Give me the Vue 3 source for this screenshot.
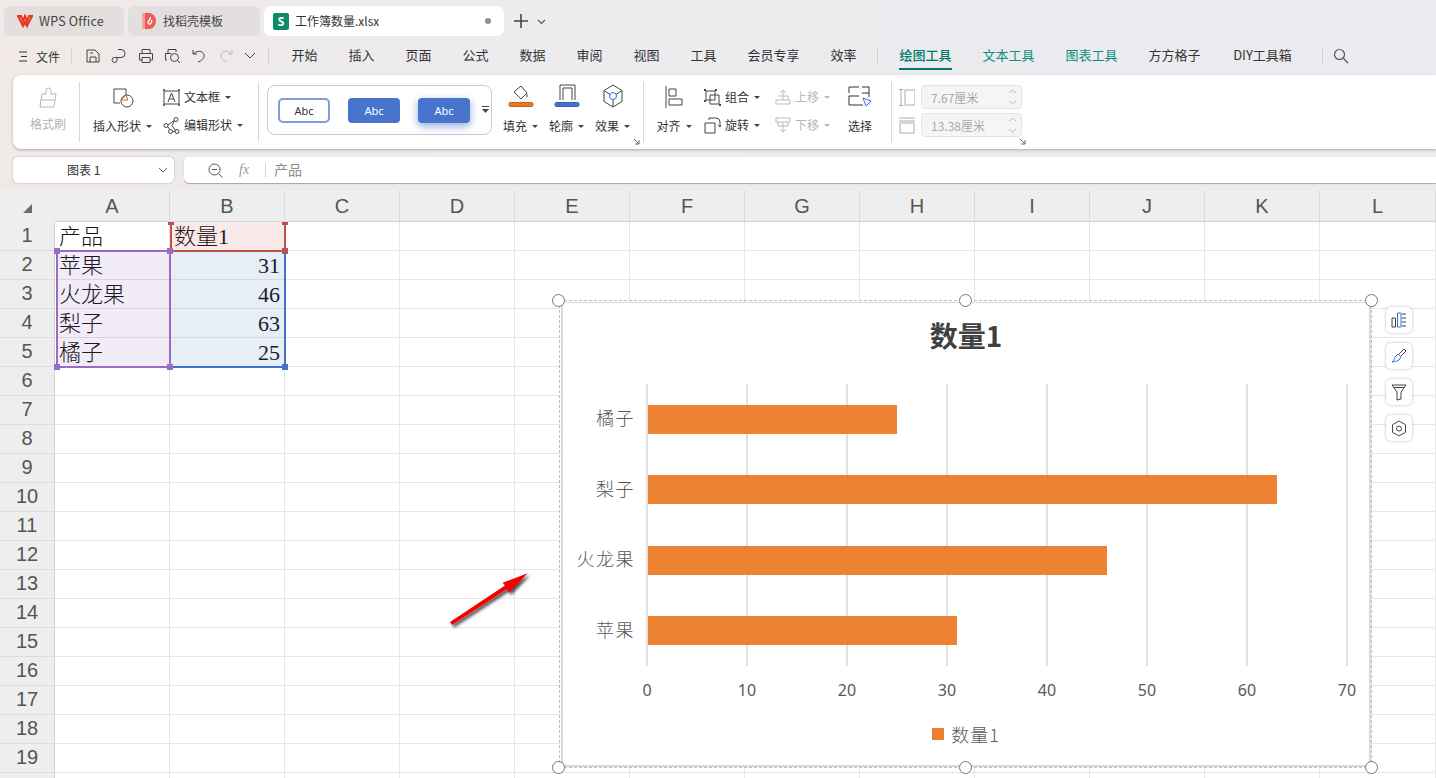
<template>
  <div class="app">
    <div class="tabbar">
      <div class="tab tab-home">
        <svg width="16" height="14" viewBox="0 0 16 14"><path d="M1 2h3l2 5 2-5 2 5 2-5h3l-5 10-2-4-2 4z" fill="none" stroke="#e8341c" stroke-width="2" stroke-linejoin="miter"/></svg>
        <span class="home-name">WPS Office</span>
      </div>
      <div class="tab tab-tpl">
        <svg width="16" height="18" viewBox="0 0 16 18"><path d="M1 1h7a7 8 0 0 1 0 16H1z" fill="#ee5a5a"/><path d="M1 1h3v16H1z" fill="#f7a09c"/><path d="M9 5c1 3-1 3-2 5 0 2 2 3 3 1l1-3" fill="none" stroke="#fff" stroke-width="1.4"/></svg>
        <span>找稻壳模板</span>
      </div>
      <div class="tab tab-active">
        <div class="s-logo">S</div>
        <span class="tab-name">工作簿数量.xlsx</span>
        <i class="tab-dot"></i>
      </div>
      <svg class="tab-plus" width="16" height="16" viewBox="0 0 16 16"><path d="M8 1v14M1 8h14" stroke="#444" stroke-width="1.6"/></svg>
      <svg class="caret-lg" width="9" height="6" viewBox="0 0 9 6"><path d="M1 1l3.500 3.500L8 1" fill="none" stroke="#555" stroke-width="1.1"/></svg>
    </div>

    <div class="menubar">
      <div class="file">
        <svg width="9" height="11" viewBox="0 0 9 11"><path d="M0 1h8M2 5.500h6M0 10h8" stroke="#333" stroke-width="1.100"/></svg>
        <span>文件</span>
      </div>
      <i class="menu-sep"></i>
      <div class="quick">
        <svg width="16" height="16" viewBox="0 0 16 16" fill="none" stroke="#444"><path d="M2 2h8l4 4v8H2zM5 14V9h6v5M5 5h3"/></svg>
        <svg width="16" height="16" viewBox="0 0 16 16" fill="none" stroke="#444"><path d="M7 1.500h3a4 4 0 0 1 0 8H7a2.500 2.500 0 0 0 0 0L3.500 9.500a2.500 2.500 0 1 0 2.500 3V9.500"/></svg>
        <svg width="16" height="16" viewBox="0 0 16 16" fill="none" stroke="#444"><path d="M4 5V1.500h8V5M4 12H1.500V5.500h13V12H12M4 9.500h8v5H4z"/></svg>
        <svg width="17" height="16" viewBox="0 0 17 16" fill="none" stroke="#444"><path d="M4 5V1.500h8V4M3 12H1.500V5.500H7"/><circle cx="10.500" cy="9.500" r="4"/><path d="M13.500 12.500l2.500 2.500"/></svg>
        <svg width="16" height="16" viewBox="0 0 16 16" fill="none" stroke="#444"><path d="M2 2v4h4M2.500 6C5 2.500 12 2 13 7c.5 4-3 6-6 7"/></svg>
        <svg width="16" height="16" viewBox="0 0 16 16" fill="none" stroke="#bbb"><path d="M14 2v4h-4M13.500 6C11 2.500 4 2 3 7c-.5 4 3 6 6 7"/></svg>
        <svg width="12" height="8" viewBox="0 0 12 8" fill="none" stroke="#444"><path d="M1 1l5 5 5-5"/></svg>
      </div>
      <i class="menu-sep sep-b"></i>
      <div v-for="m in menus" :key="m.label" class="menu-item" :style="{ width: m.w + 'px' }">
        <span>{{ m.label }}</span>
      </div>
      <i class="menu-sep sep-tools"></i>
      <div v-for="m in toolMenus" :key="m.label" class="menu-item" :class="m.cls" :style="{ width: m.w + 'px' }">
        <span>{{ m.label }}</span>
      </div>
      <i class="menu-sep sep-c"></i>
      <svg class="search" width="16" height="16" viewBox="0 0 16 16" fill="none" stroke="#555" stroke-width="1.200"><circle cx="6.500" cy="6.500" r="5"/><path d="M10.500 10.500l4.500 4.500"/></svg>
    </div>

    <div class="ribbon">
      <div class="group g-brush">
        <svg width="22" height="22" viewBox="0 0 22 22" fill="none" stroke="#b5b5b5"><path d="M9 7V3.500a2.500 2.500 0 0 1 5 0V7h5l-1 6-1 7H3l1-7 1-6z"/><path d="M4 13h14"/></svg>
        <span class="label dim">格式刷</span>
      </div>
      <i class="rib-sep"></i>
      <div class="group g-shape">
        <div class="stack-col">
          <svg width="22" height="22" viewBox="0 0 22 22" fill="none" stroke="#444"><path d="M14 3H2v14h6"/><path d="M14 3v7"/><circle cx="15" cy="15" r="6"/><path d="M9 14l5-5 2 5z" stroke="#d2691e" fill="#fff"/></svg>
          <span class="label">插入形状<i class="caret"></i></span>
        </div>
        <div class="rows">
          <div class="row-item">
            <svg width="17" height="17" viewBox="0 0 17 17" fill="none"><path d="M1 2v13M16 2v13M1 2h15M1 15h15" stroke="#444"/><path d="M5 13L8.500 4 12 13M6 10h5" stroke="#444"/><path d="M0 0h2v2H0zM15 0h2v2h-2zM0 15h2v2H0zM15 15h2v2h-2z" fill="#3a6fd8"/></svg>
            <span>文本框</span><i class="caret"></i>
          </div>
          <div class="row-item">
            <svg width="17" height="17" viewBox="0 0 17 17" fill="none" stroke="#444"><path d="M4 8.500L12 3M4 8.500l4 6M8 14.500h5M12 3l-3 5.500 4 6"/><circle cx="3" cy="8.500" r="2" fill="#fff"/><circle cx="13" cy="2.500" r="2" fill="#fff"/><circle cx="7.500" cy="14.500" r="2" fill="#fff"/><circle cx="14" cy="14.500" r="2" fill="#fff"/></svg>
            <span>编辑形状</span><i class="caret"></i>
          </div>
        </div>
      </div>
      <i class="rib-sep"></i>
      <div class="gallery">
        <div class="swatch sw-line">Abc</div>
        <div class="swatch sw-fill">Abc</div>
        <div class="swatch sw-glow">Abc</div>
        <svg class="more" width="7" height="8" viewBox="0 0 7 8"><path d="M0 .5h7" stroke="#444"/><path d="M0 3h7L3.500 7z" fill="#444"/></svg>
      </div>
      <div class="group g-fmt">
        <div class="stack-col fmt-item">
          <svg width="26" height="24" viewBox="0 0 26 24" fill="none" stroke="#444"><path d="M6 8l7-6 6 7-6 6z"/><path d="M19 10v3"/><rect x="1" y="18.500" width="24" height="4" rx="1.500" fill="#e87b22" stroke="#c9661a"/></svg>
          <span class="label">填充<i class="caret"></i></span>
        </div>
        <div class="stack-col fmt-item">
          <svg width="26" height="24" viewBox="0 0 26 24" fill="none" stroke="#444"><path d="M6 16V1h15v15M9 16V4h9v12"/><rect x="1" y="18.500" width="24" height="4" rx="1.500" fill="#4472c4" stroke="#3a62aa"/></svg>
          <span class="label">轮廓<i class="caret"></i></span>
        </div>
        <div class="stack-col fmt-item">
          <svg width="22" height="24" viewBox="0 0 22 24" fill="none" stroke="#444"><path d="M11 1l9 5.500v11L11 23l-9-5.500v-11zM2 6.500l6 4M20 6.500l-6 4M11 15v8"/><circle cx="11" cy="12" r="3.500" stroke="#3a6fd8"/></svg>
          <span class="label">效果<i class="caret"></i></span>
        </div>
        <svg class="launch" width="7" height="7" viewBox="0 0 7 7" fill="none" stroke="#666"><path d="M1 1l5 5M6 2v4H2"/></svg>
      </div>
      <i class="rib-sep"></i>
      <div class="group g-arrange">
        <div class="stack-col align-col">
          <svg width="18" height="22" viewBox="0 0 18 22" fill="none" stroke="#444"><path d="M1 0v22M4 3h7v7H4zM4 13h13v6H4z"/></svg>
          <span class="label">对齐<i class="caret"></i></span>
        </div>
        <div class="rows rows-tight">
          <div class="row-item">
            <svg width="17" height="17" viewBox="0 0 17 17" fill="none"><path d="M2 2h9v9H2zM6 6h9v9H6z" stroke="#444"/><path d="M0 0h2v2H0zM11 0h2v2h-2zM0 11h2v2H0zM15 15h2v2h-2z" fill="#444"/></svg>
            <span>组合</span><i class="caret"></i>
          </div>
          <div class="row-item">
            <svg width="17" height="17" viewBox="0 0 17 17" fill="none" stroke="#444"><path d="M1 6h10v10H1zM5 3V1h7a4 4 0 0 1 4 4v5M14 8l2 2 1-2"/></svg>
            <span>旋转</span><i class="caret"></i>
          </div>
        </div>
        <div class="rows rows-tight off">
          <div class="row-item">
            <svg width="16" height="16" viewBox="0 0 16 16" fill="none" stroke="#bbb"><path d="M1 11h14v4H1zM3 7h10v4M8 11V1M5 4l3-3 3 3"/></svg>
            <span>上移</span><i class="caret"></i>
          </div>
          <div class="row-item">
            <svg width="16" height="16" viewBox="0 0 16 16" fill="none" stroke="#bbb"><path d="M1 1h14v4H1zM3 5v4h10V5M8 5v10M5 12l3 3 3-3"/></svg>
            <span>下移</span><i class="caret"></i>
          </div>
        </div>
        <div class="stack-col pick-col">
          <svg width="24" height="22" viewBox="0 0 24 22" fill="none" stroke="#333"><path d="M1 7V1h10M14 1h7v10M1 10v9h14M1 10h10M14 7h7"/><path d="M15 12l8 3-5 5z" stroke="#3a6fd8" fill="#fff"/></svg>
          <span class="label">选择</span>
        </div>
      </div>
      <i class="rib-sep"></i>
      <div class="group g-size">
        <div class="size-row">
          <svg width="16" height="17" viewBox="0 0 16 17" fill="none" stroke="#aaa"><path d="M0 .5h4M0 16.500h4M2 .5v16M6 1h10v15H6z"/></svg>
          <div class="size-input"><span>7.67厘米</span><svg width="9" height="18" viewBox="0 0 9 18" fill="none" stroke="#bbb"><path d="M1 5l3.500-3L8 5M1 13l3.500 3L8 13"/></svg></div>
        </div>
        <div class="size-row">
          <svg width="16" height="17" viewBox="0 0 16 17" fill="none" stroke="#aaa"><path d="M0 1h16M0 4h16M1 6h14v10H1z"/></svg>
          <div class="size-input"><span>13.38厘米</span><svg width="9" height="18" viewBox="0 0 9 18" fill="none" stroke="#bbb"><path d="M1 5l3.500-3L8 5M1 13l3.500 3L8 13"/></svg></div>
        </div>
        <svg class="launch launch-b" width="7" height="7" viewBox="0 0 7 7" fill="none" stroke="#666"><path d="M1 1l5 5M6 2v4H2"/></svg>
      </div>
    </div>

    <div class="formula">
      <div class="namebox">
        <span>图表 1</span>
        <svg width="10" height="6" viewBox="0 0 10 6" fill="none" stroke="#666"><path d="M1 1l4 4 4-4"/></svg>
      </div>
      <div class="fbar">
        <svg width="15" height="15" viewBox="0 0 15 15" fill="none" stroke="#555"><circle cx="6.500" cy="6.500" r="5.500"/><path d="M4 6.500h5M10.500 10.500l4 4"/></svg>
        <span class="fx">fx</span>
        <i class="f-sep"></i>
        <span class="f-text">产品</span>
      </div>
    </div>

    <div class="sheet">
      <div class="grid">
        <div class="corner"><i></i></div>
        <div v-for="c in cols" :key="c" class="col-head">{{ c }}</div>
        <template v-for="r in rows" :key="r">
          <div class="row-head">{{ r < 20 ? r : '' }}</div>
          <div
            v-for="(c, i) in cols"
            :key="c + r"
            class="cell"
            :class="{ num: typeof cellAt(i, r) === 'number' }"
          >{{ cellAt(i, r) }}</div>
        </template>
      </div>

      <div class="grid ranges">
        <div class="range r-b1"><i class="h tl"></i><i class="h tr"></i><i class="h br"></i></div>
        <div class="range r-b"><i class="h br"></i></div>
        <div class="range r-a"><i class="h tl"></i><i class="h tr"></i><i class="h bl"></i><i class="h br"></i></div>
      </div>

      <svg class="arrow" width="90" height="66" viewBox="0 0 90 66">
        <defs>
          <filter id="arrow-shadow" x="-20%" y="-20%" width="140%" height="160%">
            <feDropShadow dx="2" dy="2.500" stdDeviation="1.800" flood-color="#000" flood-opacity="0.7" />
          </filter>
        </defs>
        <path d="M3 56L58 19.500 55.700 16.700 80.700 7.300 62 26.700 60 23 5 59z" fill="#f50000" filter="url(#arrow-shadow)" />
      </svg>

      <div class="chart-box">
        <div class="chart">
          <div class="chart-title">数量1</div>
          <div class="plot">
            <div v-for="d in chartData" :key="d.name" class="bar-row">
              <span class="cat">{{ d.name }}</span>
              <div class="track">
                <div class="bar" :style="{ width: d.value * 10 - 1 + 'px' }"></div>
              </div>
            </div>
          </div>
          <div class="axis">
            <span v-for="t in ticks" :key="t">{{ t }}</span>
          </div>
          <div class="legend"><i></i><span>数量1</span></div>
        </div>
        <i v-for="p in handles" :key="p" class="knob" :class="p"></i>
        <div class="side-tools">
          <button>
            <svg width="16" height="16" viewBox="0 0 16 16" fill="none"><path d="M1 6h3.500v9H1zM11 2h4M11 6h4M11 10h4M11 14h4" stroke="#444"/><path d="M6.500 1H10v14H6.500z" stroke="#3a6fd8"/></svg>
          </button>
          <button>
            <svg width="16" height="16" viewBox="0 0 16 16" fill="none"><path d="M8 6l5-5 2 2-5 5" stroke="#444"/><path d="M7 6l3 3-2 3c-2 1-5 2-7 2 2-1 2-3 3-5z" stroke="#3a6fd8"/></svg>
          </button>
          <button>
            <svg width="16" height="17" viewBox="0 0 16 17" fill="none" stroke="#444"><path d="M1 1h14L10 8v7l-4 1V8zM3 3.500h10"/></svg>
          </button>
          <button>
            <svg width="16" height="17" viewBox="0 0 16 17" fill="none" stroke="#444"><path d="M8 1l6.500 3.700v7.600L8 16l-6.500-3.700V4.700z"/><circle cx="8" cy="8.500" r="2.500"/></svg>
          </button>
        </div>
      </div>
    </div>
  </div>
</template>

<script setup>
const menus = [
  { label: '开始', w: 57 },
  { label: '插入', w: 57 },
  { label: '页面', w: 57 },
  { label: '公式', w: 57 },
  { label: '数据', w: 57 },
  { label: '审阅', w: 57 },
  { label: '视图', w: 57 },
  { label: '工具', w: 57 },
  { label: '会员专享', w: 83 },
  { label: '效率', w: 57 }
]

const toolMenus = [
  { label: '绘图工具', w: 83, cls: 'active' },
  { label: '文本工具', w: 83, cls: 'teal' },
  { label: '图表工具', w: 83, cls: 'teal' },
  { label: '方方格子', w: 83 },
  { label: 'DIY工具箱', w: 93 }
]

const cols = ['A', 'B', 'C', 'D', 'E', 'F', 'G', 'H', 'I', 'J', 'K', 'L']
const rows = Array.from({ length: 20 }, (_, i) => i + 1)

const tableData = [
  ['产品', '数量1'],
  ['苹果', 31],
  ['火龙果', 46],
  ['梨子', 63],
  ['橘子', 25]
]

const cellAt = (col, row) => {
  const line = tableData[row - 1]
  return line && line[col] !== undefined ? line[col] : ''
}

// top to bottom, the chart draws the last row first
const chartData = tableData
  .slice(1)
  .map(([name, value]) => ({ name, value }))
  .reverse()

const ticks = [0, 10, 20, 30, 40, 50, 60, 70]
const handles = ['k-tl', 'k-tm', 'k-tr', 'k-bl', 'k-bm', 'k-br']
</script>

<style>
html,
body {
  margin: 0;
  overflow: hidden;
}
</style>

<style scoped>
.app {
  width: 1436px;
  height: 778px;
  overflow: hidden;
  background: linear-gradient(90deg, #f0e9e7 0, #ecebee 35%, #ebecf0 100%);
  font-family: 'Noto Sans CJK SC', 'Noto Sans', sans-serif;
  color: #333;
  font-size: 12px;
}

/* tabs */
.tabbar {
  height: 42px;
  padding: 6px 0 0 4px;
  box-sizing: border-box;
  display: flex;
  align-items: flex-start;
  gap: 4px;
}
.tab {
  height: 30px;
  border-radius: 7px;
  background: #e2dfde;
  display: flex;
  align-items: center;
  box-sizing: border-box;
  padding: 0 0 2px 13px;
  gap: 6px;
  color: #444;
}
.tab svg,
.tab .s-logo {
  margin-top: 2px;
}
.home-name {
  font-size: 12.500px;
  letter-spacing: 0.2px;
}
.tab-home {
  width: 120px;
}
.tab-tpl {
  width: 132px;
}
.tab-active {
  width: 240px;
  background: #fff;
  padding: 0 13px 2px 9px;
  color: #333;
}
.s-logo {
  width: 16px;
  height: 17px;
  border-radius: 2px;
  background: #0f8a66;
  color: #fff;
  font: bold 12px/17px 'Noto Sans', sans-serif;
  text-align: center;
}
.tab-name {
  flex: 1;
}
.tab-dot {
  width: 6px;
  height: 6px;
  border-radius: 50%;
  background: #8f8f8f;
  margin-top: 2px;
}
.tab-plus {
  margin: 7px 0 0 5px;
}
.caret-lg {
  margin: 13px 0 0 4px;
}

/* menu row */
.menubar {
  height: 28px;
  display: flex;
  align-items: center;
  padding-left: 19px;
  font-size: 13px;
}
.file {
  display: flex;
  align-items: center;
  gap: 8px;
  font-size: 12px;
  width: 52px;
}
.menu-sep {
  width: 1px;
  height: 18px;
  background: #d3d1d1;
  margin-right: 8px;
  flex: none;
}
.quick {
  display: flex;
  align-items: center;
  width: 188px;
  justify-content: space-between;
  padding: 0 12px 0 5px;
  box-sizing: border-box;
}
.sep-b {
  margin-right: 7px;
}
.sep-tools {
  margin: 0 6px 0 5px;
}
.menu-item {
  text-align: center;
  flex: none;
  position: relative;
  height: 28px;
  line-height: 26px;
}
.active {
  color: #00796b;
  font-weight: 500;
}
.active span {
  display: inline-block;
  border-bottom: 2px solid #00796b;
  height: 26px;
}
.teal {
  color: #0b8f7e;
}
.sep-c {
  margin: 0 0 0 13px;
}
.search {
  margin-left: 10px;
}

/* ribbon */
.ribbon {
  height: 74px;
  margin: 5px 0 0 13px;
  background: #fff;
  border-radius: 8px 0 0 8px;
  box-shadow: 0 1px 3px rgba(0, 0, 0, 0.28);
  display: flex;
  align-items: center;
}
.rib-sep {
  width: 1px;
  height: 60px;
  background: #d9d9d9;
  flex: none;
}
.group {
  height: 100%;
  display: flex;
  box-sizing: border-box;
  position: relative;
  flex: none;
}
.label {
  display: flex;
  align-items: center;
  white-space: nowrap;
  line-height: 16px;
  gap: 3px;
}
.dim {
  color: #b3b3b3;
}
.caret {
  display: inline-block;
  width: 0;
  height: 0;
  border: 3px solid transparent;
  border-top: 3px solid #444;
  border-bottom: 0;
  margin-left: 2px;
}
.g-brush {
  width: 66px;
  flex-direction: column;
  align-items: center;
  padding: 12px 0 0 4px;
  gap: 7px;
}
.stack-col {
  display: flex;
  flex-direction: column;
  align-items: center;
  justify-content: space-between;
  padding: 11px 0 15px;
  box-sizing: border-box;
  height: 100%;
}
.g-shape {
  width: 178px;
  padding-left: 13px;
  gap: 11px;
}
.rows {
  display: flex;
  flex-direction: column;
  justify-content: space-between;
  padding: 13px 0 15px;
  box-sizing: border-box;
}
.row-item {
  display: flex;
  align-items: center;
  gap: 3px;
  height: 18px;
  line-height: 18px;
  white-space: nowrap;
}
.row-item svg {
  margin-right: 1px;
}
.gallery {
  width: 225px;
  height: 50px;
  box-sizing: border-box;
  margin: 0 4px 4px 8px;
  border: 1px solid #c9c9c9;
  border-radius: 8px;
  flex: none;
  display: flex;
  align-items: center;
  padding-left: 10px;
  gap: 18px;
  position: relative;
}
.swatch {
  width: 52px;
  height: 25px;
  box-sizing: border-box;
  border-radius: 4px;
  font: 11px/25px 'Noto Sans', sans-serif;
  text-align: center;
  color: #fff;
  background: #4874cd;
}
.sw-line {
  background: #fff;
  color: #333;
  border: 2px solid #7f9ddb;
  line-height: 21px;
  border-radius: 5px;
}
.sw-glow {
  box-shadow: 0 3px 8px rgba(68, 114, 196, 0.6);
}
.more {
  position: absolute;
  right: 2px;
  top: 20px;
}
.g-fmt {
  width: 147px;
  padding-left: 9px;
  gap: 15px;
}
.fmt-item {
  width: 31px;
  padding: 9px 0 15px;
}
.launch {
  position: absolute;
  right: 3px;
  bottom: 4px;
}
.g-arrange {
  width: 247px;
  padding-left: 13px;
}
.align-col {
  width: 34px;
  margin-right: 13px;
}
.rows-tight {
  width: 71px;
}
.off {
  color: #b8b8b8;
}
.off .caret {
  border-top-color: #bbb;
}
.pick-col {
  margin-left: 2px;
}
.g-size {
  padding: 10px 0 0 7px;
  flex-direction: column;
  gap: 4px;
  width: 140px;
}
.size-row {
  display: flex;
  align-items: center;
  gap: 6px;
}
.size-input {
  width: 101px;
  height: 24px;
  box-sizing: border-box;
  background: #f5f5f5;
  border: 1px solid #e4e4e4;
  border-radius: 4px;
  display: flex;
  align-items: center;
  justify-content: space-between;
  padding: 0 4px 0 9px;
  color: #a9a9a9;
}
.launch-b {
  right: 6px;
}

/* name box and formula */
.formula {
  height: 26px;
  margin: 8px 0 7px 13px;
  display: flex;
  gap: 10px;
}
.namebox {
  width: 161px;
  background: #fff;
  border-radius: 5px;
  box-shadow: 0 0 2px rgba(0, 0, 0, 0.3);
  display: flex;
  align-items: center;
  box-sizing: border-box;
  padding: 0 6px 0 54px;
  justify-content: space-between;
}
.namebox span {
  margin-top: -2px;
}
.fbar {
  flex: 1;
  background: #fff;
  border-radius: 5px 0 0 5px;
  box-shadow: 0 1px 1px rgba(0, 0, 0, 0.3);
  display: flex;
  align-items: center;
  padding-left: 24px;
}
.fx {
  font: italic 14px 'Liberation Serif', serif;
  color: #999;
  margin-left: 16px;
}
.f-sep {
  width: 1px;
  height: 15px;
  background: #d5d5d5;
  margin: 0 8px 0 16px;
}
.f-text {
  font-size: 14px;
  color: #8a8a8a;
  margin-top: -3px;
}

/* sheet */
.sheet {
  position: relative;
  height: 588px;
  background: #fff;
}
.grid {
  display: grid;
  grid-template-columns: 55px repeat(11, 115px) 116px;
  grid-template-rows: 32px repeat(20, 29px);
}
.ranges {
  position: absolute;
  inset: 0;
  pointer-events: none;
}
.corner {
  background: #eeeeee;
  display: flex;
  align-items: center;
  justify-content: center;
}
.corner i {
  width: 0;
  height: 0;
  margin-top: 4px;
  border-left: 9px solid transparent;
  border-bottom: 9px solid #6c6c6c;
}
.col-head {
  background: #eeeeee;
  border-right: 1px solid #dcdcdc;
  border-bottom: 1px solid #d2d2d2;
  box-sizing: border-box;
  font: 20px/33px 'Liberation Sans', sans-serif;
  color: #555;
  text-align: center;
}
.row-head {
  background: #eeeeee;
  border-bottom: 1px solid #dcdcdc;
  border-right: 1px solid #d2d2d2;
  box-sizing: border-box;
  font: 20px/27px 'Liberation Sans', sans-serif;
  color: #555;
  text-align: center;
}
.cell {
  border-right: 1px solid #e6e6e6;
  border-bottom: 1px solid #e6e6e6;
  box-sizing: border-box;
  font: 300 22px/30px 'Liberation Serif', 'Noto Sans CJK SC', serif;
  color: #111;
  padding: 0 4px;
  white-space: nowrap;
  overflow: visible;
}
.num {
  text-align: right;
}
.range {
  position: relative;
  box-sizing: border-box;
}
.r-a {
  grid-column: 2;
  grid-row: 3 / span 4;
  background: rgba(116, 65, 172, 0.1);
  border: 2px solid #9a6cc4;
  margin: -1px -1px -1px 1px;
}
.r-b1 {
  grid-column: 3;
  grid-row: 2;
  background: rgba(192, 80, 77, 0.12);
  border: 2px solid #c0504d;
  border-top: 0;
  margin: 0 -1px -1px 0;
}
.r-b {
  grid-column: 3;
  grid-row: 3 / span 4;
  background: rgba(68, 114, 196, 0.12);
  border: 2px solid #4472c4;
  border-left: 0;
  border-top: 0;
  margin: 1px -1px -1px 1px;
}
.h {
  position: absolute;
  width: 6px;
  height: 6px;
  background: #9a6cc4;
}
.r-b1 .h {
  background: #c0504d;
}
.r-b .h {
  background: #4472c4;
}
.tl {
  left: -4px;
  top: -4px;
}
.tr {
  right: -4px;
  top: -4px;
}
.bl {
  left: -4px;
  bottom: -4px;
}
.br {
  right: -4px;
  bottom: -4px;
}
.r-b1 .tl,
.r-b1 .tr {
  top: 0;
  height: 3px;
}
.arrow {
  position: absolute;
  left: 447px;
  top: 376px;
}

/* chart */
.chart-box {
  position: absolute;
  left: 559px;
  top: 110px;
  width: 813px;
  height: 468px;
  box-sizing: border-box;
  border: 1px dashed #bdbdbd;
}
.chart {
  position: absolute;
  inset: 1px 0 0 1px;
  height: 465px;
  width: 810px;
  box-sizing: border-box;
  background: #fff;
  border: 2px solid #d9d9d9;
  border-top-width: 1px;
}
.chart-title {
  font-size: 28px;
  font-weight: 700;
  line-height: 40px;
  text-align: center;
  color: #404040;
  height: 40px;
  margin: 12px 0 29px;
}
.plot {
  display: flex;
  flex-direction: column;
}
.bar-row {
  height: 70.500px;
  display: flex;
  align-items: center;
}
.cat {
  width: 70px;
  font: 300 18px 'Noto Sans CJK SC', sans-serif;
  letter-spacing: 1.500px;
  color: #595959;
  text-align: right;
  margin: 0 11px 4px 2px;
  white-space: nowrap;
}
.track {
  width: 702px;
  height: 100%;
  display: flex;
  align-items: center;
  background: repeating-linear-gradient(90deg, #e0e0e0 0 2px, transparent 2px 100px);
}
.bar {
  height: 29px;
  margin-left: 2px;
  background: #ed8232;
}
.axis {
  display: flex;
  margin: 14px 0 0 34px;
  font: 16px/20px 'Noto Sans', sans-serif;
  color: #595959;
}
.axis span {
  width: 100px;
  flex: none;
  text-align: center;
}
.legend {
  margin-top: 22px;
  display: flex;
  justify-content: center;
  align-items: center;
  gap: 7px;
  font: 300 18px/24px 'Noto Sans CJK SC', sans-serif;
  letter-spacing: 1px;
  color: #595959;
}
.legend i {
  width: 12px;
  height: 12px;
  background: #ed7d31;
}
.knob {
  position: absolute;
  width: 13px;
  height: 13px;
  box-sizing: border-box;
  border: 1.500px solid #777;
  border-radius: 50%;
  background: #fff;
  z-index: 1;
}
.k-tl,
.k-bl {
  left: -8px;
}
.k-tm,
.k-bm {
  left: 399px;
}
.k-tr,
.k-br {
  right: -7px;
}
.k-tl,
.k-tm,
.k-tr {
  top: -7px;
}
.k-bl,
.k-bm,
.k-br {
  bottom: -7px;
}
.side-tools {
  position: absolute;
  left: 100%;
  top: 6px;
  margin-left: 15px;
  display: flex;
  flex-direction: column;
  gap: 10px;
}
.side-tools button {
  width: 26px;
  height: 26px;
  padding: 0;
  border: 0;
  border-radius: 5px;
  background: #fff;
  box-shadow: 0 0 3px rgba(0, 0, 0, 0.3);
  display: flex;
  align-items: center;
  justify-content: center;
}
</style>
